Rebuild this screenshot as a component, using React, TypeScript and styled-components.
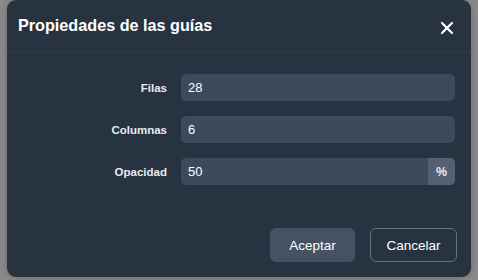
import React, { useState } from 'react'
import styled, { createGlobalStyle } from 'styled-components'

const GlobalStyle = createGlobalStyle`
    html, body {
        margin: 0;
        padding: 0;
        background: #8a8a8a;
        font-family: "Liberation Sans", Arial, sans-serif;
    }
`

const Backdrop = styled.div`
    width: 478px;
    height: 280px;
    display: flex;
    align-items: flex-start;
    padding-left: 7px;
    box-sizing: border-box;
    overflow: hidden;
`

const Dialog = styled.div`
    width: 464px;
    height: 277px;
    background-color: #283342;
    border-radius: 9px;
    display: flex;
    flex-direction: column;
    color: #ffffff;
    box-shadow: 0 0 6px rgba(0, 0, 0, 0.25);
`

const Header = styled.div`
    height: 52px;
    display: flex;
    align-items: center;
    justify-content: space-between;
    padding: 0 17px 0 11px;
    border-bottom: 1px solid #323d4c;
    flex-shrink: 0;
`

const Title = styled.h2`
    margin: 0;
    font-size: 16.2px;
    font-weight: 700;
    color: #ffffff;
    padding-bottom: 1px;
`

const CloseButton = styled.button`
    border: none;
    background: transparent;
    padding: 0;
    width: 14px;
    height: 14px;
    display: flex;
    align-items: center;
    justify-content: center;
    cursor: pointer;
    margin-top: 3px;
`

const Form = styled.div`
    display: grid;
    grid-template-columns: 146px 1fr;
    column-gap: 14px;
    row-gap: 15px;
    align-items: center;
    padding: 21px 16px 0 14px;
`

const Label = styled.label`
    text-align: right;
    font-size: 11.5px;
    font-weight: 700;
    color: #e8ebef;
`

const Field = styled.div`
    display: flex;
    height: 27px;
    border-radius: 5px;
    overflow: hidden;
    background-color: #3c4a5c;
`

const Input = styled.input`
    flex: 1;
    min-width: 0;
    border: none;
    outline: none;
    background: transparent;
    color: #ffffff;
    font-family: "Liberation Sans", Arial, sans-serif;
    font-size: 13px;
    padding: 0 7px;
`

const Addon = styled.span`
    width: 27px;
    display: flex;
    align-items: center;
    justify-content: center;
    background-color: #556173;
    font-size: 12.5px;
    font-weight: 700;
    color: #e8ebef;
`

const Footer = styled.div`
    margin-top: auto;
    display: flex;
    justify-content: flex-end;
    gap: 15px;
    padding: 0 14px 15px 0;
`

const Button = styled.button<{ $primary?: boolean }>`
    height: 34px;
    border-radius: 6px;
    font-family: "Liberation Sans", Arial, sans-serif;
    font-size: 13.5px;
    color: #ffffff;
    cursor: pointer;
    padding: 0;
    width: ${({ $primary }) => ($primary ? '85px' : '87px')};
    background-color: ${({ $primary }) => ($primary ? '#465263' : 'transparent')};
    border: 1px solid ${({ $primary }) => ($primary ? '#465263' : '#657181')};
`

const App: React.FunctionComponent = () => {
    const [rows, setRows] = useState('28')
    const [cols, setCols] = useState('6')
    const [opacity, setOpacity] = useState('50')

    return (
        <>
            <GlobalStyle />
            <Backdrop>
                <Dialog>
                    <Header>
                        <Title>Propiedades de las guías</Title>
                        <CloseButton aria-label="Cerrar">
                            <svg width="12" height="12" viewBox="0 0 12 12">
                                <path d="M1 1 L11 11 M11 1 L1 11" stroke="#ffffff" strokeWidth="2.2" strokeLinecap="round" />
                            </svg>
                        </CloseButton>
                    </Header>

                    <Form>
                        <Label>Filas</Label>
                        <Field>
                            <Input value={rows} onChange={e => setRows(e.target.value)} />
                        </Field>

                        <Label>Columnas</Label>
                        <Field>
                            <Input value={cols} onChange={e => setCols(e.target.value)} />
                        </Field>

                        <Label>Opacidad</Label>
                        <Field>
                            <Input value={opacity} onChange={e => setOpacity(e.target.value)} />
                            <Addon>%</Addon>
                        </Field>
                    </Form>

                    <Footer>
                        <Button $primary>Aceptar</Button>
                        <Button>Cancelar</Button>
                    </Footer>
                </Dialog>
            </Backdrop>
        </>
    )
}

export default App
